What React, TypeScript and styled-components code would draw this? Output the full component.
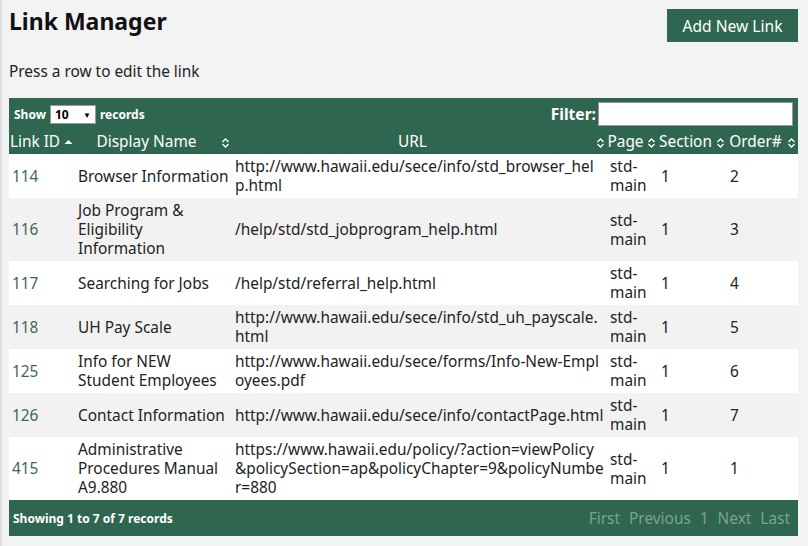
import React from "react";
import styled, { createGlobalStyle } from "styled-components";

const GREEN = "#2f664f";

const GlobalStyle = createGlobalStyle`
  html, body {
    margin: 0;
    padding: 0;
    background: #f3f3f3;
    font-family: "Noto Sans", "Open Sans", sans-serif;
    color: #222;
  }
`;

const Page = styled.div`
  width: 808px;
  height: 546px;
  box-sizing: border-box;
  padding: 7px 10px 0 7px;
  border-left: 2px solid #dedede;
  overflow: hidden;
`;

const TopBar = styled.div`
  display: flex;
  justify-content: space-between;
  align-items: flex-start;
`;

const Title = styled.h1`
  margin: 0;
  font-size: 23px;
  font-weight: 700;
  line-height: 28px;
  color: #111;
`;

const AddButton = styled.button`
  background: ${GREEN};
  color: #fff;
  border: none;
  height: 33px;
  width: 131px;
  padding: 0;
  margin-top: 2px;
  font-family: inherit;
  font-size: 15.6px;
  cursor: pointer;
`;

const Hint = styled.p`
  margin: 19px 0 0;
  font-size: 15.4px;
  line-height: 22px;
`;

const TableWrap = styled.div`
  margin-top: 15px;
  background: ${GREEN};
`;

const Controls = styled.div`
  display: flex;
  justify-content: space-between;
  align-items: center;
  height: 32px;
  padding: 0 5px 0 5px;
  color: #fff;
  font-weight: 700;
`;

const Length = styled.label`
  display: flex;
  align-items: center;
  gap: 4px;
  font-size: 12px;
`;

const FakeSelect = styled.span`
  display: inline-flex;
  justify-content: space-between;
  align-items: center;
  width: 46px;
  height: 19px;
  box-sizing: border-box;
  padding: 0 4px;
  background: #fff;
  border: 1px solid #999;
  color: #000;
  font-size: 12px;
  font-weight: 700;
  &::after {
    content: "▼";
    font-size: 8px;
  }
`;

const FilterLabel = styled.label`
  display: flex;
  align-items: center;
  font-size: 15.6px;
`;

const FilterInput = styled.input`
  width: 195px;
  height: 24px;
  box-sizing: border-box;
  margin-left: 2px;
  border: 1px solid #999;
  background: #fff;
`;

const Table = styled.table`
  width: 100%;
  border-collapse: collapse;
  table-layout: fixed;
  font-size: 15.4px;
`;

const Th = styled.th<{ $w: number }>`
  width: ${(p) => p.$w}px;
  box-sizing: border-box;
  position: relative;
  height: 24px;
  padding: 0 14px 0 0;
  color: #fff;
  font-weight: 400;
  font-size: 15.4px;
  text-align: center;
  white-space: nowrap;
  line-height: 24px;
`;

const SortIcon = styled.svg`
  position: absolute;
  right: 2px;
  top: 8px;
`;

const Row = styled.tr<{ $alt: boolean }>`
  background: ${(p) => (p.$alt ? "#f2f2f2" : "#fff")};
  cursor: pointer;
`;

const Td = styled.td`
  padding: 3px 3px;
  line-height: 19px;
  vertical-align: middle;
  word-break: break-all;
`;

const IdCell = styled(Td)`
  color: #3f6656;
`;

const NameCell = styled(Td)`
  word-break: normal;
`;

const Footer = styled.div`
  display: flex;
  justify-content: space-between;
  align-items: center;
  height: 36px;
  padding: 0 8px 0 4px;
  color: #fff;
`;

const Info = styled.span`
  font-size: 12px;
  font-weight: 700;
`;

const Pager = styled.div`
  display: flex;
  gap: 9px;
  font-size: 15.4px;
  color: #7da290;
`;

type SortState = "asc" | "both";

const Sort = ({ state }: { state: SortState }) =>
  state === "asc" ? (
    <SortIcon width="9" height="9" viewBox="0 0 9 9">
      <path d="M0.5 6 L4.5 2 L8.5 6 Z" fill="#fff" />
    </SortIcon>
  ) : (
    <SortIcon width="9" height="10" viewBox="0 0 9 10">
      <path d="M1.5 4 L4.5 1 L7.5 4 M1.5 6 L4.5 9 L7.5 6" fill="none" stroke="#fff" strokeWidth="1.4" />
    </SortIcon>
  );

const columns: { label: string; w: number; sort: SortState }[] = [
  { label: "Link ID", w: 66, sort: "asc" },
  { label: "Display Name", w: 157, sort: "both" },
  { label: "URL", w: 375, sort: "both" },
  { label: "Page", w: 51, sort: "both" },
  { label: "Section", w: 69, sort: "both" },
  { label: "Order#", w: 71, sort: "both" },
];

const links = [
  { id: 114, name: "Browser Information", url: "http://www.hawaii.edu/sece/info/std_browser_help.html", order: 2 },
  { id: 116, name: "Job Program & Eligibility Information", url: "/help/std/std_jobprogram_help.html", order: 3 },
  { id: 117, name: "Searching for Jobs", url: "/help/std/referral_help.html", order: 4 },
  { id: 118, name: "UH Pay Scale", url: "http://www.hawaii.edu/sece/info/std_uh_payscale.html", order: 5 },
  { id: 125, name: "Info for NEW Student Employees", url: "http://www.hawaii.edu/sece/forms/Info-New-Employees.pdf", order: 6 },
  { id: 126, name: "Contact Information", url: "http://www.hawaii.edu/sece/info/contactPage.html", order: 7 },
  {
    id: 415,
    name: "Administrative Procedures Manual A9.880",
    url: "https://www.hawaii.edu/policy/?action=viewPolicy&policySection=ap&policyChapter=9&policyNumber=880",
    order: 1,
  },
];

const App = () => (
  <Page>
    <GlobalStyle />
    <TopBar>
      <Title>Link Manager</Title>
      <AddButton>Add New Link</AddButton>
    </TopBar>
    <Hint>Press a row to edit the link</Hint>
    <TableWrap>
      <Controls>
        <Length>
          Show <FakeSelect>10</FakeSelect> records
        </Length>
        <FilterLabel>
          Filter:
          <FilterInput type="text" />
        </FilterLabel>
      </Controls>
      <Table>
        <thead>
          <tr>
            {columns.map((c) => (
              <Th key={c.label} $w={c.w}>
                {c.label}
                <Sort state={c.sort} />
              </Th>
            ))}
          </tr>
        </thead>
        <tbody>
          {links.map((l, i) => (
            <Row key={l.id} $alt={i % 2 === 1}>
              <IdCell>{l.id}</IdCell>
              <NameCell>{l.name}</NameCell>
              <Td>{l.url}</Td>
              <NameCell>std-main</NameCell>
              <Td>1</Td>
              <Td>{l.order}</Td>
            </Row>
          ))}
        </tbody>
      </Table>
      <Footer>
        <Info>Showing 1 to 7 of 7 records</Info>
        <Pager>
          <span>First</span>
          <span>Previous</span>
          <span>1</span>
          <span>Next</span>
          <span>Last</span>
        </Pager>
      </Footer>
    </TableWrap>
  </Page>
);

export default App;
